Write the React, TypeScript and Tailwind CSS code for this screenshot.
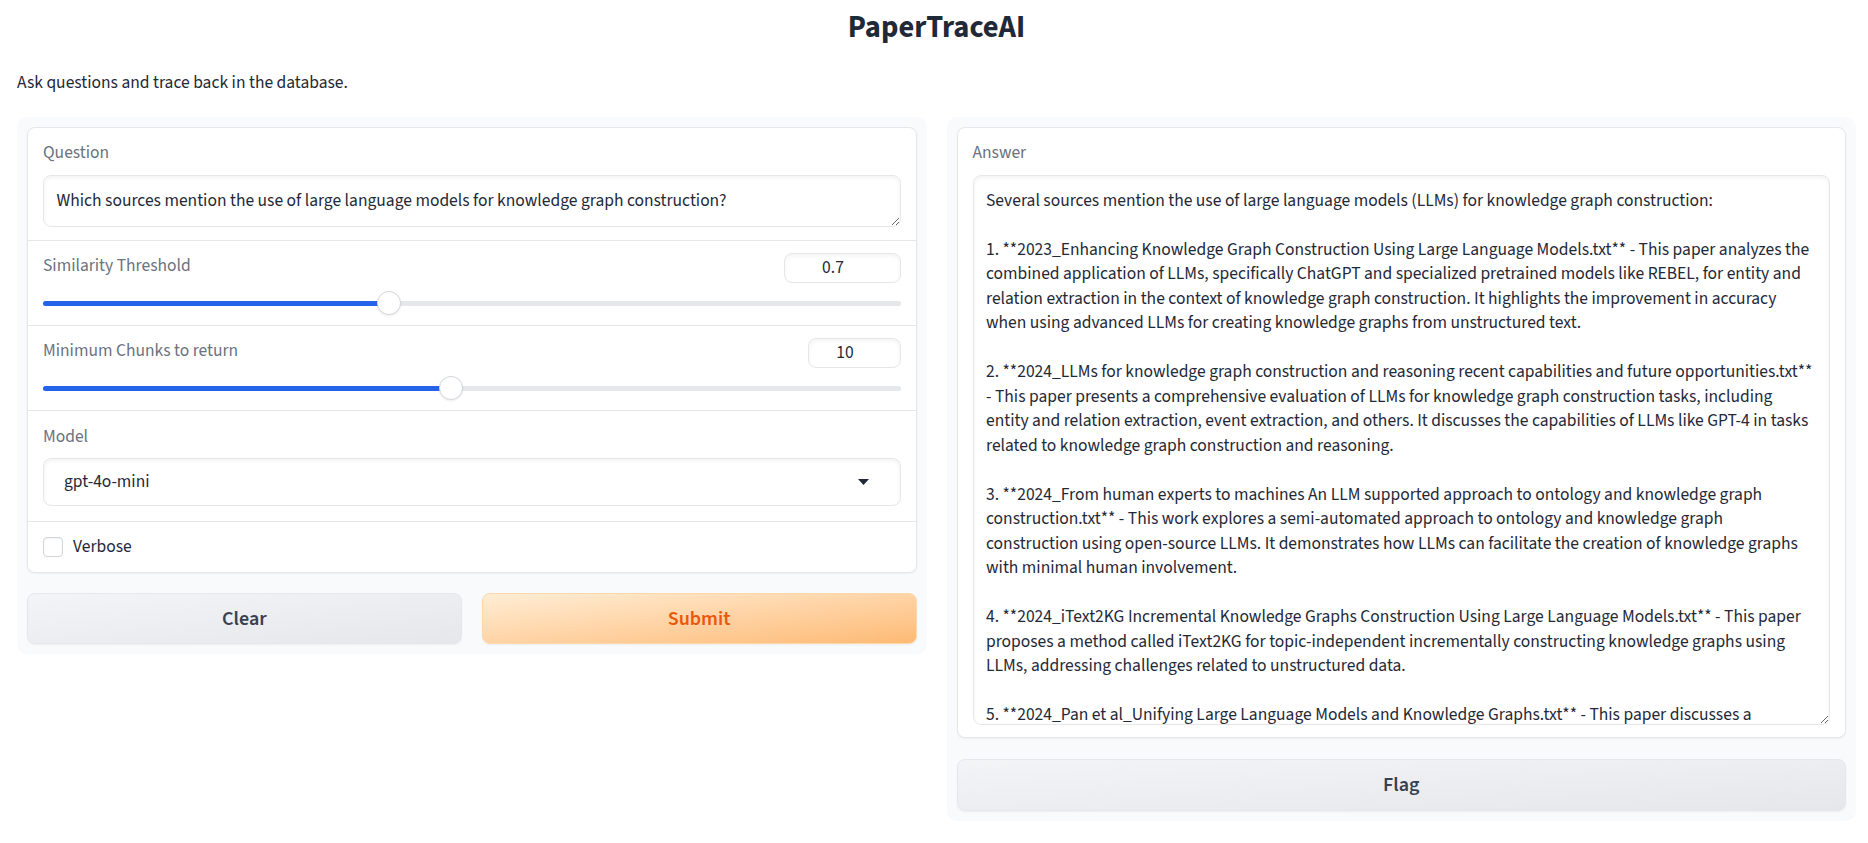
const answer = [
  "Several sources mention the use of large language models (LLMs) for knowledge graph construction:",
  "",
  "1. **2023_Enhancing Knowledge Graph Construction Using Large Language Models.txt** - This paper analyzes the",
  "combined application of LLMs, specifically ChatGPT and specialized pretrained models like REBEL, for entity and",
  "relation extraction in the context of knowledge graph construction. It highlights the improvement in accuracy",
  "when using advanced LLMs for creating knowledge graphs from unstructured text.",
  "",
  "2. **2024_LLMs for knowledge graph construction and reasoning recent capabilities and future opportunities.txt**",
  "- This paper presents a comprehensive evaluation of LLMs for knowledge graph construction tasks, including",
  "entity and relation extraction, event extraction, and others. It discusses the capabilities of LLMs like GPT-4 in tasks",
  "related to knowledge graph construction and reasoning.",
  "",
  "3. **2024_From human experts to machines An LLM supported approach to ontology and knowledge graph",
  "construction.txt** - This work explores a semi-automated approach to ontology and knowledge graph",
  "construction using open-source LLMs. It demonstrates how LLMs can facilitate the creation of knowledge graphs",
  "with minimal human involvement.",
  "",
  "4. **2024_iText2KG Incremental Knowledge Graphs Construction Using Large Language Models.txt** - This paper",
  "proposes a method called iText2KG for topic-independent incrementally constructing knowledge graphs using",
  "LLMs, addressing challenges related to unstructured data.",
  "",
  "5. **2024_Pan et al_Unifying Large Language Models and Knowledge Graphs.txt** - This paper discusses a",
].join("\n");

function Label({ children }: { children: React.ReactNode }) {
  return <div className="h-[22px] text-[17.5px] leading-[22px] text-[#6b7280]">{children}</div>;
}

function SliderBlock({ label, value, pct, boxW }: { label: string; value: string; pct: string; boxW: string }) {
  return (
    <div className="px-[15px] pt-[12px] pb-[11px]">
      <div className="flex h-[30px] items-start justify-between">
        <div className="pt-[2px]">
          <Label>{label}</Label>
        </div>
        <div
          className={`flex h-[30px] items-center justify-center rounded-[8px] border border-[#e5e7eb] bg-white pr-[18px] text-[17.5px] text-[#1f2937] shadow-[inset_0_2px_4px_rgba(0,0,0,0.05)] ${boxW}`}
        >
          {value}
        </div>
      </div>
      <div className="mt-[9px] flex h-[22px] items-center">
        <div className="relative h-[5px] w-full rounded-full bg-[#e5e7eb]">
          <div className="absolute inset-y-0 left-0 rounded-full bg-[#2563eb]" style={{ width: pct }} />
          <div
            className="absolute top-1/2 h-[24px] w-[24px] -translate-x-1/2 -translate-y-1/2 rounded-full border border-[#d1d5db] bg-white shadow-[0_1px_2px_rgba(0,0,0,0.08)]"
            style={{ left: pct }}
          />
        </div>
      </div>
    </div>
  );
}

export default function App() {
  return (
    <div className="min-h-screen bg-white font-['Source_Sans_3','Lato',sans-serif] text-[#1f2937]">
      <div className="pl-[17px] pr-[12px]">
        <h1 className="pt-[11px] text-center text-[30.5px] font-bold leading-[34px]">PaperTraceAI</h1>
        <p className="mt-[26px] text-[17.5px] leading-[24px]">Ask questions and trace back in the database.</p>

        <div className="mt-[22px] flex items-start gap-[20px]">
          {/* left column */}
          <div className="flex-1 rounded-[10px] bg-[#f9fafb] p-[10px]">
            <div className="overflow-hidden rounded-[8px] border border-[#e5e7eb] bg-white shadow-[0_1px_2px_rgba(0,0,0,0.05)]">
              <div className="px-[15px] pt-[14px] pb-[13px]">
                <Label>Question</Label>
                <textarea
                  readOnly
                  defaultValue="Which sources mention the use of large language models for knowledge graph construction?"
                  className="mt-[11px] block h-[52px] w-full resize-y overflow-hidden rounded-[8px] border border-[#e5e7eb] bg-white px-[12.5px] pt-[12.5px] text-[17.5px] leading-[24.5px] text-[#1f2937] shadow-[inset_0_2px_4px_rgba(0,0,0,0.05)] outline-none"
                />
              </div>
              <div className="border-t border-[#e5e7eb]">
                <SliderBlock label="Similarity Threshold" value="0.7" pct="40.3%" boxW="w-[117px]" />
              </div>
              <div className="border-t border-[#e5e7eb]">
                <SliderBlock label="Minimum Chunks to return" value="10" pct="47.6%" boxW="w-[93px]" />
              </div>
              <div className="border-t border-[#e5e7eb] px-[15px] pt-[15px] pb-[15px]">
                <Label>Model</Label>
                <div className="mt-[10px] flex h-[48px] items-center justify-between rounded-[8px] border border-[#e5e7eb] bg-white pl-[20px] pr-[31px] shadow-[inset_0_2px_4px_rgba(0,0,0,0.05)]">
                  <span className="text-[17.5px] text-[#1f2937]">gpt-4o-mini</span>
                  <svg width="11" height="6" viewBox="0 0 11 6" className="text-[#1f2937]">
                    <path d="M0 0h11L5.5 6z" fill="currentColor" />
                  </svg>
                </div>
              </div>
              <div className="flex items-center gap-[10px] border-t border-[#e5e7eb] px-[15px] py-[15px]">
                <div className="h-[20px] w-[20px] rounded-[4px] border border-[#d1d5db] bg-white shadow-[inset_0_1px_2px_rgba(0,0,0,0.05)]" />
                <span className="text-[17.5px] leading-[20px] text-[#1f2937]">Verbose</span>
              </div>
            </div>

            <div className="mt-[20px] flex gap-[20px]">
              <button className="h-[51px] flex-1 rounded-[8px] border border-[#e5e7eb] bg-linear-to-br from-[#f3f4f6] to-[#e5e7eb] text-[20px] font-semibold text-[#374151] shadow-[0_1px_2px_rgba(0,0,0,0.05)]">
                Clear
              </button>
              <button className="h-[51px] flex-1 rounded-[8px] border border-[#fed7aa] bg-linear-to-br from-[#ffedd5] to-[#fdba74] text-[20px] font-semibold text-[#ea580c] shadow-[0_1px_2px_rgba(0,0,0,0.05)]">
                Submit
              </button>
            </div>
          </div>

          {/* right column */}
          <div className="flex-1 rounded-[10px] bg-[#f9fafb] p-[10px]">
            <div className="overflow-hidden rounded-[8px] border border-[#e5e7eb] bg-white px-[15px] pt-[14px] pb-[12px] shadow-[0_1px_2px_rgba(0,0,0,0.05)]">
              <Label>Answer</Label>
              <textarea
                readOnly
                wrap="off"
                defaultValue={answer}
                className="mt-[11px] block h-[550px] w-full resize-y overflow-hidden whitespace-pre rounded-[8px] border border-[#e5e7eb] bg-white px-[12.5px] pt-[12.5px] text-[17.5px] leading-[24.5px] text-[#1f2937] shadow-[inset_0_2px_4px_rgba(0,0,0,0.05)] outline-none"
              />
            </div>
            <button className="mt-[21px] h-[52px] w-full rounded-[8px] border border-[#e5e7eb] bg-linear-to-br from-[#f3f4f6] to-[#e5e7eb] text-[20px] font-semibold text-[#374151] shadow-[0_1px_2px_rgba(0,0,0,0.05)]">
              Flag
            </button>
          </div>
        </div>
      </div>
    </div>
  );
}
